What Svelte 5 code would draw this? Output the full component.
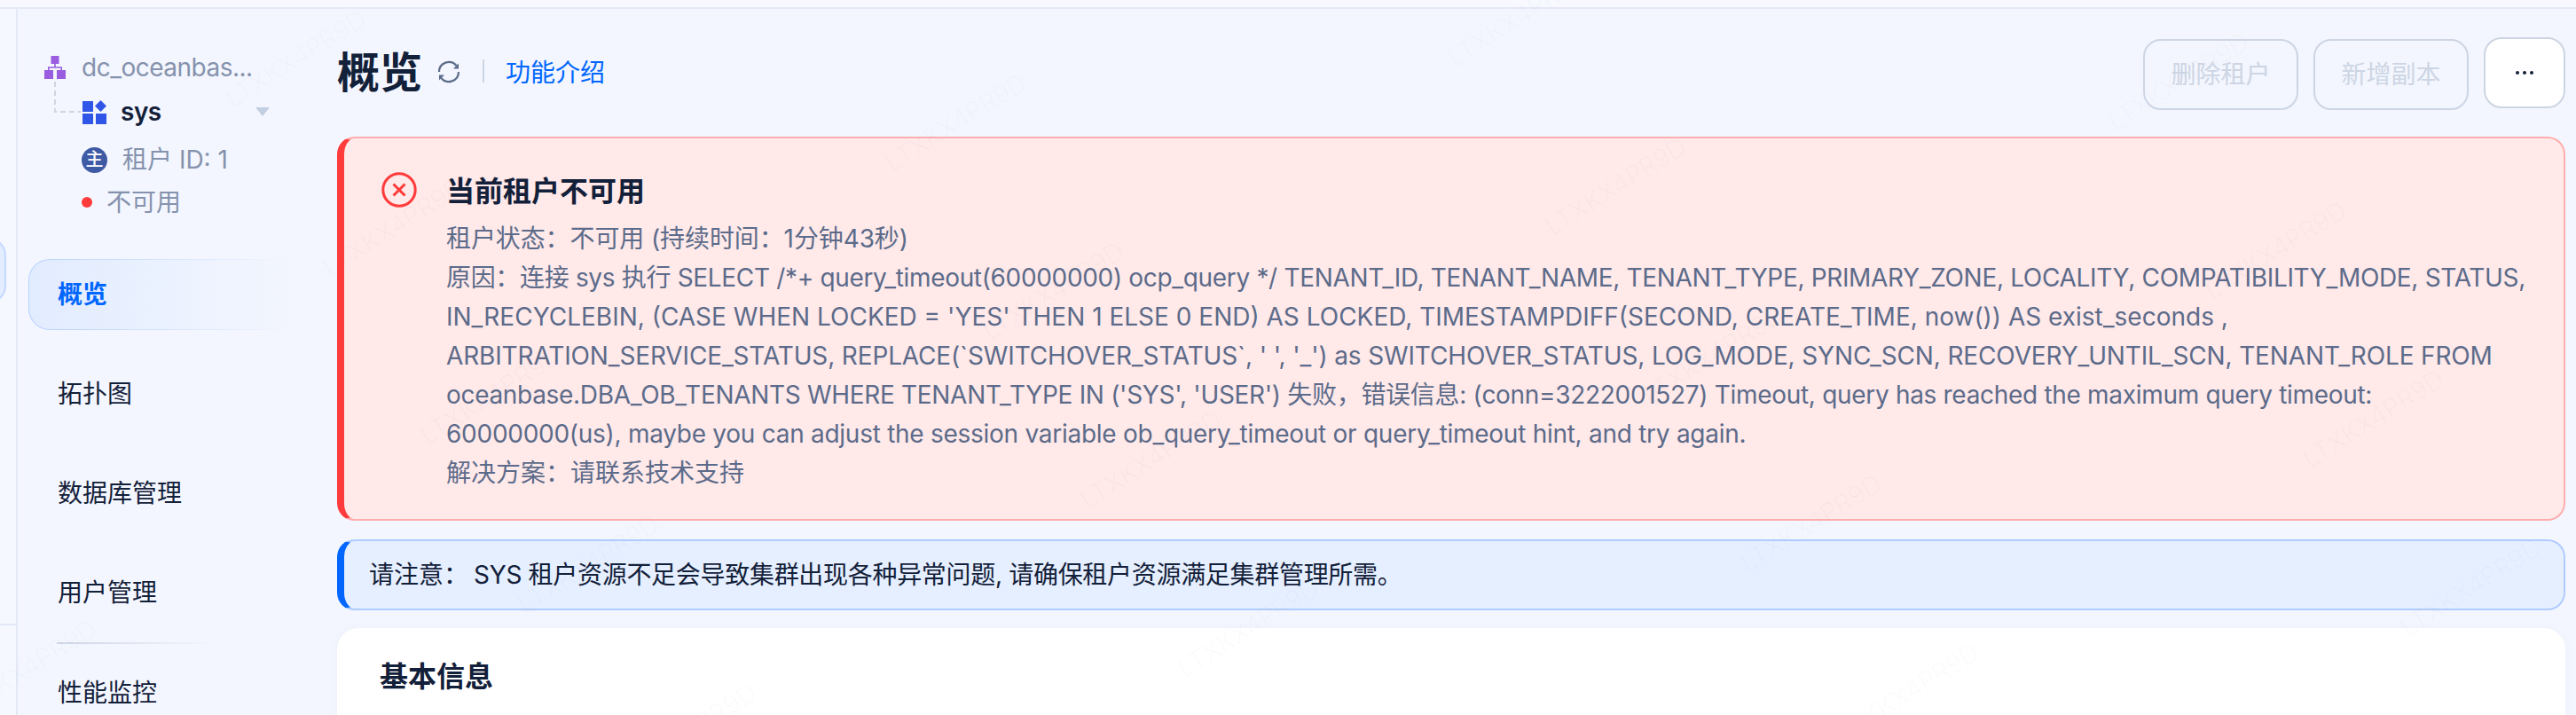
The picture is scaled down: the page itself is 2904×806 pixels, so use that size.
<script>
	const navItems = ['拓扑图', '数据库管理', '用户管理'];

	const statusLines = [
		{ text: '租户状态：不可用 (持续时间：1分钟43秒)', track: -0.1 },
		{ text: "原因：连接 sys 执行 SELECT /*+ query_timeout(60000000) ocp_query */ TENANT_ID, TENANT_NAME, TENANT_TYPE, PRIMARY_ZONE, LOCALITY, COMPATIBILITY_MODE, STATUS,", track: -0.33 },
		{ text: "IN_RECYCLEBIN, (CASE WHEN LOCKED = 'YES' THEN 1 ELSE 0 END) AS LOCKED, TIMESTAMPDIFF(SECOND, CREATE_TIME, now()) AS exist_seconds ,", track: 0 },
		{ text: "ARBITRATION_SERVICE_STATUS, REPLACE(`SWITCHOVER_STATUS`, ' ', '_') as SWITCHOVER_STATUS, LOG_MODE, SYNC_SCN, RECOVERY_UNTIL_SCN, TENANT_ROLE FROM", track: -0.14 },
		{ text: "oceanbase.DBA_OB_TENANTS WHERE TENANT_TYPE IN ('SYS', 'USER') 失败，错误信息: (conn=3222001527) Timeout, query has reached the maximum query timeout:", track: -0.31 },
		{ text: '60000000(us), maybe you can adjust the session variable ob_query_timeout or query_timeout hint, and try again.', track: -0.27 },
		{ text: '解决方案：请联系技术支持', track: 0 }
	];

	// watermark tiles sit on a rotated lattice
	const marks = [];
	for (let m = -6; m < 12; m++) {
		for (let n = -2; n < 7; n++) {
			const x = 421 + m * 110 + n * 524 - 157;
			const y = 25 + m * 190 - n * 308 + 98 - 26;
			if (x > -200 && x < 2904 && y > -20 && y < 920) marks.push({ x, y });
		}
	}
</script>

<div class="page">
	<div class="topbar"></div>
	<div class="body">
		<div class="strip">
			<div class="strip-pill"></div>
			<div class="strip-line"></div>
		</div>

		<aside class="side">
			<div class="tenant">
				<svg class="link" width="32" height="40" viewBox="0 0 32 40">
					<path d="M1 1V35H30" fill="none" stroke="#cfd6e2" stroke-width="2" stroke-dasharray="6 4" />
				</svg>
				<div class="row cluster">
					<svg width="24" height="26" viewBox="0 0 24 26" fill="#9a5ddf">
						<rect x="7.5" y="0" width="9" height="9" />
						<rect x="0" y="16" width="10" height="10" />
						<rect x="14" y="16" width="10" height="10" />
						<path d="M11.2 9h1.6v3.2H20V16h-1.6v-2.2H5.6V16H4v-3.8h7.2z" />
					</svg>
					<span>dc_oceanbas...</span>
				</div>
				<div class="row sys">
					<svg width="28" height="27" viewBox="0 0 28 27" fill="#3056e8">
						<rect x="0" y="1" width="12" height="12" />
						<path d="M20.5 0l6.5 6.5-6.5 6.5-6.5-6.5z" />
						<rect x="0" y="15" width="12" height="12" />
						<rect x="15" y="15" width="12" height="12" />
					</svg>
					<strong>sys</strong>
					<i class="caret"></i>
				</div>
				<div class="row tid">
					<span class="badge">主</span>
					<span>租户 ID: 1</span>
				</div>
				<div class="row state">
					<i class="dot"></i>
					<span>不可用</span>
				</div>
			</div>

			<nav class="nav">
				<a class="item active" href="#overview">概览</a>
				{#each navItems as label}
					<a class="item" href="#{label}">{label}</a>
				{/each}
				<div class="rule"></div>
				<a class="item" href="#perf">性能监控</a>
			</nav>
		</aside>

		<main class="main">
			<header class="head">
				<h1>概览</h1>
				<svg class="refresh" width="26" height="26" viewBox="0 0 26 26" fill="none" stroke="#5c6b8a" stroke-width="2.2">
					<path d="M2 13A11 11 0 0 1 21.5 6" />
					<path d="M24 13A11 11 0 0 1 4.5 20" />
					<path d="M24 3.5v6h-6z" stroke="none" fill="#5c6b8a" />
					<path d="M2 22.5v-6h6z" stroke="none" fill="#5c6b8a" />
				</svg>
				<span class="sep"></span>
				<a class="intro" href="#intro">功能介绍</a>
				<div class="actions">
					<button class="btn" disabled>删除租户</button>
					<button class="btn" disabled>新增副本</button>
					<button class="btn more">
						<svg width="22" height="6" viewBox="0 0 22 6" fill="#132039">
							<circle cx="3" cy="3" r="2" />
							<circle cx="11" cy="3" r="2" />
							<circle cx="19" cy="3" r="2" />
						</svg>
					</button>
				</div>
			</header>

			<section class="alert error">
				<svg class="err-icon" width="40" height="40" viewBox="0 0 40 40" fill="none" stroke="#ff3b3b" stroke-width="3">
					<circle cx="20" cy="20" r="18.2" />
					<path d="M13.5 13.5l13 13M26.5 13.5l-13 13" />
				</svg>
				<div class="err-body">
					<h2>当前租户不可用</h2>
					{#each statusLines as line}
						<p style="letter-spacing: {line.track}px">{line.text}</p>
					{/each}
				</div>
			</section>

			<section class="alert info">
				<span>请注意：</span>
				<span class="info-text">SYS 租户资源不足会导致集群出现各种异常问题, 请确保租户资源满足集群管理所需。</span>
			</section>

			<section class="card">
				<h3>基本信息</h3>
			</section>
		</main>
	</div>

	<div class="marks">
		{#each marks as p}
			<span class="mark" style="left: {p.x}px; top: {p.y}px">LTXKX4PR9D</span>
		{/each}
	</div>
</div>

<style>
	:global(body) {
		margin: 0;
		background: #f3f6fe;
	}
	.page {
		position: relative;
		width: 2904px;
		height: 806px;
		overflow: hidden;
		display: flex;
		flex-direction: column;
		background: #f3f6fe;
		color: #132039;
		font-family: Inter, 'Noto Sans CJK SC', sans-serif;
		font-size: 28px;
		line-height: 44px;
	}
	.topbar {
		height: 8px;
		flex: none;
		background: #f7f9ff;
		border-bottom: 2px solid #e3e9f6;
	}
	.body {
		flex: 1;
		display: flex;
		min-height: 0;
	}
	.strip {
		width: 18px;
		flex: none;
		border-right: 2px solid #e3e9f6;
		background: #f5f8ff;
		overflow: hidden;
	}
	.strip-pill {
		width: 40px;
		height: 74px;
		margin: 258px 0 0 -33px;
		box-sizing: border-box;
		background: #e3edff;
		border: 2px solid #c4d9ff;
		border-radius: 20px;
	}
	.strip-line {
		height: 2px;
		margin-top: 361px;
		background: #e3e9f6;
	}
	.side {
		width: 360px;
		flex: none;
		box-sizing: border-box;
	}
	.tenant {
		position: relative;
		width: 254px;
		margin: 50px 0 0 30px;
		color: #8592ad;
	}
	.link {
		position: absolute;
		left: 11px;
		top: 31px;
	}
	.row {
		display: flex;
		align-items: center;
		height: 32px;
		line-height: 32px;
	}
	.cluster {
		gap: 18px;
		letter-spacing: -0.5px;
	}
	.sys {
		margin-top: 18px;
		padding-left: 43px;
		gap: 15px;
		color: #132039;
	}
	.sys strong {
		font-weight: 600;
		letter-spacing: -0.5px;
	}
	.caret {
		margin-left: auto;
		width: 0;
		height: 0;
		border-left: 8px solid transparent;
		border-right: 8px solid transparent;
		border-top: 10px solid #c3cee3;
	}
	.tid {
		margin-top: 22px;
		padding-left: 42px;
		gap: 17px;
	}
	.badge {
		width: 29px;
		height: 29px;
		border-radius: 50%;
		background: #3f5aa5;
		color: #fff;
		font-size: 20px;
		font-weight: 500;
		text-align: center;
		line-height: 29px;
	}
	.state {
		margin-top: 16px;
		padding-left: 42px;
		gap: 16px;
	}
	.dot {
		width: 12px;
		height: 12px;
		border-radius: 50%;
		background: #ff3b3b;
	}
	.nav {
		display: flex;
		flex-direction: column;
		gap: 32px;
		margin: 48px 0 0 12px;
		width: 300px;
	}
	.item {
		height: 80px;
		flex: none;
		box-sizing: border-box;
		padding-left: 33px;
		display: flex;
		align-items: center;
		color: #132039;
		text-decoration: none;
	}
	.item.active {
		padding-left: 32px;
		color: #0066ff;
		font-weight: 700;
		border: 1px solid transparent;
		border-radius: 24px 0 0 24px;
		background:
			linear-gradient(90deg, #e2ecff, #f3f6fe) padding-box,
			linear-gradient(90deg, #b8d2ff, #f3f6fe) border-box;
	}
	.rule {
		width: 180px;
		height: 2px;
		flex: none;
		margin: -16px 0 -17px 32px;
		background: linear-gradient(90deg, #cdd5e6, #f3f6fe);
	}
	.main {
		flex: 1;
		min-width: 0;
		padding-right: 12px;
		display: flex;
		flex-direction: column;
	}
	.head {
		display: flex;
		flex: none;
		align-items: center;
		height: 82px;
		margin: 32px 0 30px;
	}
	h1 {
		margin: -3px 0 0;
		font-size: 48px;
		font-weight: 700;
		line-height: 60px;
	}
	.refresh {
		margin: -4px 0 0 17px;
	}
	.sep {
		width: 2px;
		height: 26px;
		margin: -6px 24px 0 25px;
		background: #cdd5e4;
	}
	.intro {
		color: #0066ff;
		text-decoration: none;
		margin-top: -3px;
	}
	.actions {
		margin-left: auto;
		display: flex;
		gap: 17px;
		align-items: flex-start;
	}
	.btn {
		width: 175px;
		height: 80px;
		margin-top: 2px;
		padding: 0;
		box-sizing: border-box;
		background: transparent;
		border: 2px solid #cdd5e4;
		border-radius: 20px;
		color: #cdd5e4;
		font: inherit;
	}
	.btn.more {
		width: 92px;
		margin-top: 0;
		background: #fff;
		display: flex;
		align-items: center;
		justify-content: center;
	}
	.alert {
		flex: none;
		box-sizing: border-box;
		border-radius: 20px;
		border-width: 2px 2px 2px 8px;
		border-style: solid;
	}
	.error {
		height: 433px;
		display: flex;
		padding: 36px 0 0 42px;
		gap: 33px;
		background: #ffe9e9;
		border-color: #ffadad #ffadad #ffadad #ff3b3b;
		color: #5c6b8a;
	}
	.err-icon {
		flex: none;
		margin-top: 2px;
	}
	.err-body h2 {
		margin: 0 0 7px;
		font-size: 32px;
		font-weight: 600;
		line-height: 48px;
		color: #132039;
	}
	.err-body p {
		margin: 0;
		white-space: nowrap;
	}
	.info {
		height: 80px;
		margin-top: 21px;
		padding-left: 28px;
		display: flex;
		align-items: center;
		gap: 6px;
		background: #e5efff;
		border-color: #b0cbff #b0cbff #b0cbff #0066ff;
	}
	.info-text {
		letter-spacing: -0.3px;
	}
	.card {
		flex: none;
		height: 200px;
		margin-top: 20px;
		box-sizing: border-box;
		background: #fff;
		border-radius: 24px;
		padding: 31px 48px;
		box-shadow: 0 0 8px rgba(90, 110, 160, 0.05);
	}
	h3 {
		margin: 0;
		font-size: 32px;
		font-weight: 700;
		line-height: 48px;
	}
	.marks {
		position: absolute;
		inset: 0;
		pointer-events: none;
	}
	.mark {
		position: absolute;
		font-size: 29px;
		font-weight: 300;
		line-height: 1;
		color: rgba(90, 100, 130, 0.03);
		transform: rotate(-32deg);
		transform-origin: left bottom;
		white-space: nowrap;
	}
</style>
